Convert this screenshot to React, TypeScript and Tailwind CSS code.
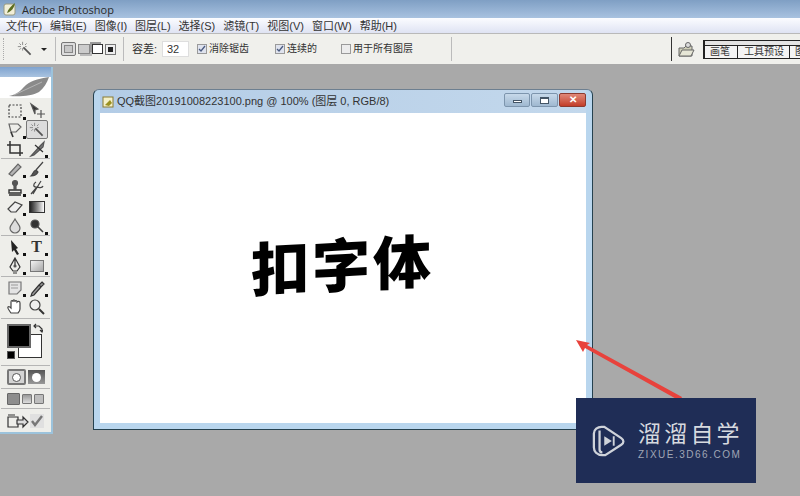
import type { ReactNode } from "react";

const menus = ["文件(F)", "编辑(E)", "图像(I)", "图层(L)", "选择(S)", "滤镜(T)", "视图(V)", "窗口(W)", "帮助(H)"];

// small gray tool glyph, 20x18 box
function Glyph({ children }: { children: ReactNode }) {
  return (
    <svg width="20" height="18" viewBox="0 0 20 18" fill="none" stroke="#555" strokeWidth="1.2">
      {children}
    </svg>
  );
}

function Tool({ children, more, active }: { children: ReactNode; more?: boolean; active?: boolean }) {
  return (
    <div className={`relative flex h-[19px] w-[22px] items-center justify-center rounded-[2px] ${active ? "border border-[#777] bg-[#dcdcdc]" : ""}`}>
      {children}
      {more && <div className="absolute bottom-[0px] right-[0px] h-[3px] w-[3px] bg-[#111]" />}
    </div>
  );
}

function Row({ children }: { children: ReactNode }) {
  return <div className="flex justify-center">{children}</div>;
}

function Divider() {
  return <div className="mx-[1px] h-[1px] shrink-0 bg-[#b5b5b5]" />;
}

function Check({ on, label, className }: { on?: boolean; label: string; className: string }) {
  return (
    <div className={`flex items-center gap-[2px] ${className}`}>
      <div className={`flex h-[10px] w-[10px] items-center justify-center border border-[#9a9a9a] ${on ? "bg-[#dfe3ee]" : "bg-[#ececec]"}`}>
        {on && (
          <svg width="8" height="8" viewBox="0 0 8 8" fill="none" stroke="#4a5a80" strokeWidth="1.3">
            <path d="M1 4l2 2 4-5" />
          </svg>
        )}
      </div>
      <span>{label}</span>
    </div>
  );
}

function Wand({ size = 20 }: { size?: number }) {
  return (
    <svg width={size} height={size} viewBox="0 0 20 20" fill="none" stroke="#555" strokeWidth="1.5">
      <path d="M8 8l9 9" strokeWidth="2.2" />
      <path d="M7 1v4M7 9v3M1 7h4M10 5l2-2M3 3l2 2M3 11l2-2M10 7h2" strokeWidth="1" stroke="#777" />
    </svg>
  );
}

function ToolPalette() {
  return (
    <div className="absolute left-0 top-[67px] flex h-[367px] w-[53px] flex-col border-r-2 border-b-2 border-[#9cc3dc] bg-[#eeeeea]">
      <div className="h-[10px] shrink-0 bg-gradient-to-b from-[#7fa3cf] to-[#a9c3e0]" />
      <div className="flex h-[21px] shrink-0 items-center justify-end bg-white pr-[1px]">
        <svg width="42" height="21" viewBox="0 0 42 21">
          <path d="M1 19C10 17 13 13 18 8 24 3 34 1 41 0 39 6 36 11 31 15 24 19 12 20 1 19Z" fill="#8a8a8a" />
          <path d="M6 18L34 5" stroke="#c4c4c4" strokeWidth="0.7" />
        </svg>
      </div>
      <div className="flex flex-1 flex-col pt-[3px]">
        <div className="flex flex-col">
          <Row>
            <Tool more>
              <Glyph>
                <rect x="4" y="3" width="12" height="12" strokeDasharray="2 1.5" stroke="#444" />
              </Glyph>
            </Tool>
            <Tool>
              <Glyph>
                <path d="M4 2l7 5-3 1 0 4Z" fill="#333" />
                <path d="M14 8v8M10 12h8" stroke="#555" />
              </Glyph>
            </Tool>
          </Row>
          <Row>
            <Tool more>
              <Glyph>
                <path d="M4 3h9l3 3-5 5H6Z" stroke="#666" />
                <path d="M6 11l2 5" stroke="#333" strokeWidth="1.6" />
              </Glyph>
            </Tool>
            <Tool active>
              <Wand size={16} />
            </Tool>
          </Row>
          <Row>
            <Tool>
              <Glyph>
                <path d="M2 5h13v11M5 1v12h13" stroke="#333" strokeWidth="1.5" />
              </Glyph>
            </Tool>
            <Tool more>
              <Glyph>
                <path d="M4 16L14 5l3-3-1 5L7 15Z" fill="#777" />
                <path d="M8 5l8 7" stroke="#333" />
              </Glyph>
            </Tool>
          </Row>
        </div>
        <Divider />
        <div className="flex flex-col">
          <Row>
            <Tool more>
              <Glyph>
                <path d="M4 14L13 4l3 3-9 9Z" fill="#b5b5b5" stroke="#666" />
              </Glyph>
            </Tool>
            <Tool more>
              <Glyph>
                <path d="M16 2L9 10M9 10c-3 1-3 4-5 6 4 0 6-2 7-4Z" fill="#555" stroke="#444" />
              </Glyph>
            </Tool>
          </Row>
          <Row>
            <Tool more>
              <Glyph>
                <circle cx="10" cy="4" r="2.5" fill="#555" />
                <path d="M9 6h2v4H9Z" fill="#555" />
                <path d="M4 11h12v3H4ZM4 16h12" stroke="#333" strokeWidth="1.4" />
              </Glyph>
            </Tool>
            <Tool more>
              <Glyph>
                <path d="M4 15L10 8M9 3c-3 2-3 5 0 5s6 2 7-1M14 2L6 15" stroke="#444" />
              </Glyph>
            </Tool>
          </Row>
          <Row>
            <Tool more>
              <Glyph>
                <path d="M3 11l7-7 7 3-6 7H6Z" fill="#eee" stroke="#444" />
              </Glyph>
            </Tool>
            <Tool>
              <div className="h-[12px] w-[16px] border border-[#333] bg-gradient-to-r from-[#222] to-white" />
            </Tool>
          </Row>
          <Row>
            <Tool more>
              <Glyph>
                <path d="M10 2c2 4 5 6 5 9a5 5 0 01-10 0c0-3 3-5 5-9Z" fill="#ddd" stroke="#666" />
              </Glyph>
            </Tool>
            <Tool more>
              <Glyph>
                <circle cx="8" cy="7" r="4" fill="#333" />
                <path d="M10 9l6 6" stroke="#444" strokeWidth="1.6" />
              </Glyph>
            </Tool>
          </Row>
        </div>
        <Divider />
        <div className="flex flex-col py-[1px]">
          <Row>
            <Tool more>
              <Glyph>
                <path d="M6 2l7 8-2 1 3 5-2 1-3-5-2 2Z" fill="#222" stroke="none" />
              </Glyph>
            </Tool>
            <Tool more>
              <span className="font-['Liberation_Serif',serif] text-[16px] leading-none font-bold text-[#333]">T</span>
            </Tool>
          </Row>
          <Row>
            <Tool more>
              <Glyph>
                <path d="M10 1l5 9-3 4H8l-3-4ZM10 1v7M8 16h4" stroke="#333" />
                <circle cx="10" cy="9" r="1" fill="#333" />
              </Glyph>
            </Tool>
            <Tool more>
              <div className="h-[12px] w-[14px] border border-[#777] bg-gradient-to-br from-[#f2f2f2] to-[#a8a8a8]" />
            </Tool>
          </Row>
        </div>
        <Divider />
        <div className="flex flex-col pt-[1px] pb-[2px]">
          <Row>
            <Tool more>
              <Glyph>
                <path d="M4 3h12v8l-4 4H4Z" fill="#e4e4e4" stroke="#777" />
                <path d="M6 6h7M6 9h7" stroke="#999" />
              </Glyph>
            </Tool>
            <Tool more>
              <Glyph>
                <path d="M15 3l2 2-3 3-2-2ZM12 6L5 14l-1 3 3-1 7-8" fill="#999" stroke="#333" />
              </Glyph>
            </Tool>
          </Row>
          <Row>
            <Tool>
              <Glyph>
                <path d="M6 15c-2-3-4-5-3-6s3 1 3 1V4c0-2 2-2 2 0 0-3 2-3 2 0 0-2 2-2 2 0 1-1 3-1 3 1v6c0 2-1 3-2 4Z" fill="#fff" stroke="#444" />
              </Glyph>
            </Tool>
            <Tool>
              <Glyph>
                <circle cx="8" cy="7" r="5" fill="#eee" stroke="#444" />
                <path d="M12 11l5 5" stroke="#333" strokeWidth="2" />
              </Glyph>
            </Tool>
          </Row>
        </div>
        <Divider />
        {/* foreground and background swatches */}
        <div className="relative h-[46px] shrink-0">
          <div className="absolute left-[18px] top-[15px] h-[24px] w-[24px] border border-[#333] bg-white" />
          <div className="absolute left-[7px] top-[5px] h-[24px] w-[24px] border-2 border-[#666] bg-black" />
          <svg className="absolute left-[33px] top-[4px]" width="10" height="10" viewBox="0 0 10 10" fill="none" stroke="#333" strokeWidth="1.2">
            <path d="M1 3h5l3 3v3M3 1L1 3l2 2M7 7l2 2 1-2" />
          </svg>
          <div className="absolute left-[7px] top-[32px] h-[8px] w-[8px] border border-[#555] bg-black" />
        </div>
        <Divider />
        <div className="flex h-[22px] shrink-0 items-center justify-center gap-[2px]">
          <div className="flex h-[16px] w-[19px] items-center justify-center rounded-[2px] border-2 border-[#777] bg-[#d4d4d4]">
            <div className="h-[9px] w-[9px] rounded-full border border-[#555] bg-white" />
          </div>
          <div className="flex h-[14px] w-[17px] items-center justify-center bg-gradient-to-b from-[#555] to-[#999]">
            <div className="h-[9px] w-[9px] rounded-full bg-white" />
          </div>
        </div>
        <Divider />
        <div className="flex h-[19px] shrink-0 items-center justify-center gap-[2px]">
          <div className="h-[12px] w-[13px] rounded-[1px] border border-[#666] bg-[#8d8d8d]" />
          <div className="h-[10px] w-[10px] rounded-[1px] border border-[#777] bg-gradient-to-b from-[#999] to-[#ddd]" />
          <div className="h-[10px] w-[10px] rounded-[1px] border border-[#777] bg-[#bdbdbd]" />
        </div>
        <Divider />
        <div className="flex h-[23px] shrink-0 items-center justify-center gap-[1px]">
          <svg width="22" height="16" viewBox="0 0 22 16" fill="none" stroke="#333" strokeWidth="1.2">
            <path d="M1 4h10v10H1ZM1 2h7" />
            <path d="M10 7h6V4l5 5-5 5v-3h-6Z" fill="#ddd" />
          </svg>
          <div className="flex h-[14px] w-[14px] items-center justify-center bg-[#e0e0e0]">
            <svg width="12" height="12" viewBox="0 0 12 12" fill="none" stroke="#777" strokeWidth="2.4">
              <path d="M1 6l3 4 7-9" />
            </svg>
          </div>
        </div>
      </div>
    </div>
  );
}

function DocWindow() {
  return (
    <div className="absolute left-[93px] top-[89px] flex h-[341px] w-[500px] flex-col rounded-t-[6px] border border-[#25414f] border-t-[#6d7f90] bg-[#b9d6ee] px-[6px] pb-[6px]">
      <div className="flex h-[23px] items-center bg-gradient-to-r from-[#b3cce6] to-[#c3d8ec]">
        <svg className="mr-[3px] ml-[2px]" width="12" height="12" viewBox="0 0 12 12">
          <rect x="1" y="1" width="10" height="10" fill="#f4f0c8" stroke="#8a7a30" />
          <path d="M3 9l5-5 2 3-3 3Z" fill="#9a9020" />
        </svg>
        <span className="text-[11px] leading-none whitespace-nowrap text-[#333]">QQ截图20191008223100.png @ 100% (图层 0, RGB/8)</span>
        <div className="ml-auto flex items-center gap-[1px] pb-[3px]">
          <div className="flex h-[14px] w-[26px] items-center justify-center rounded-[2px] border border-[#7d95ad] bg-gradient-to-b from-[#c7d9ea] to-[#9fb8d0]">
            <div className="mt-[3px] h-[3px] w-[9px] border border-[#445566] bg-white" />
          </div>
          <div className="flex h-[14px] w-[27px] items-center justify-center rounded-[2px] border border-[#7d95ad] bg-gradient-to-b from-[#c7d9ea] to-[#9fb8d0]">
            <div className="h-[7px] w-[9px] border border-t-2 border-[#445566] bg-white" />
          </div>
          <div className="flex h-[14px] w-[27px] items-center justify-center rounded-[2px] border border-[#8c3b30] bg-gradient-to-b from-[#e08878] to-[#c23c28] text-[10px] leading-none font-bold text-white">
            ✕
          </div>
        </div>
      </div>
      <div className="flex flex-1 items-center justify-center bg-white pb-[13px]">
        <span className="-skew-y-3 font-['Noto_Sans_CJK_SC',sans-serif] text-[58px] leading-none font-black tracking-[3px] text-black">
          扣字体
        </span>
      </div>
    </div>
  );
}

function Watermark() {
  return (
    <div className="absolute left-[576px] top-[398px] flex h-[85px] w-[180px] items-center bg-[#1f2d56] pl-[16px]">
      <svg width="34" height="36" viewBox="0 0 36 38" fill="none" stroke="#cfd3da" strokeWidth="2.4">
        <path d="M10 4h3l18 12c3 2 3 5 0 7L14 34H11C5 34 2 30 2 26V11c0-4 4-7 8-7Z" />
        <path d="M8 8v20c0 2 1 3 3 3" />
        <path d="M13 14l8 5-8 5Z" fill="#cfd3da" stroke="none" />
        <path d="M23 14v10" strokeWidth="2" />
      </svg>
      <div className="ml-[12px] flex flex-col gap-[6px]">
        <span className="font-['Noto_Sans_CJK_SC',sans-serif] text-[23px] leading-[23px] tracking-[3.2px] whitespace-nowrap text-[#d6d9df]">溜溜自学</span>
        <span className="text-[10px] leading-[10px] tracking-[1.5px] whitespace-nowrap text-[#a0a6b5]">ZIXUE.3D66.COM</span>
      </div>
    </div>
  );
}

export default function App() {
  return (
    <div className="relative flex h-[496px] w-[800px] flex-col overflow-hidden bg-[#a9a9a9] font-['Liberation_Sans','Noto_Sans_CJK_SC',sans-serif] text-[#333]">
      <div className="flex h-[18px] items-center bg-gradient-to-b from-[#7f9fc4] to-[#a8c2e0] pl-[3px]">
        <svg width="14" height="14" viewBox="0 0 14 14">
          <rect x="1" y="2" width="11" height="11" rx="2" fill="#f2efd8" stroke="#9a9a80" />
          <path d="M4 11c1-4 4-7 8-10-1 5-3 8-8 10Z" fill="#5c6d20" />
        </svg>
        <span className="ml-[5px] font-['Open_Sans',sans-serif] text-[11px] leading-none text-[#2a2a2a]">Adobe Photoshop</span>
      </div>
      <div className="flex h-[15px] items-center gap-[8px] bg-gradient-to-b from-[#fbfcff] to-[#dfe3f3] pt-[2px] pl-[6px] text-[11px] leading-none">
        {menus.map((m) => (
          <span key={m}>{m}</span>
        ))}
      </div>
      <div className="flex h-[31px] items-center border-t border-[#b9b9b9] bg-[#f0f0ec] text-[10px] leading-none">
        <div className="ml-[3px] h-[22px] w-[1px] border-l border-dotted border-[#aaa]" />
        <div className="ml-[13px]">
          <Wand size={16} />
        </div>
        <div className="ml-[8px] h-0 w-0 border-x-[3px] border-t-[3px] border-x-transparent border-t-[#222]" />
        <div className="ml-[8px] h-[24px] w-[1px] bg-[#bbb]" />
        <div className="ml-[5px] flex items-center gap-[2px]">
          <div className="flex h-[14px] w-[15px] items-center justify-center rounded-[2px] border border-[#777] bg-[#ddd]">
            <div className="h-[8px] w-[9px] border border-[#888] bg-[#c8c8c8]" />
          </div>
          <div className="h-[10px] w-[12px] border border-[#888] bg-[#ccc] shadow-[2px_2px_0_#bbb]" />
          <div className="h-[10px] w-[11px] border border-[#333] bg-white shadow-[-2px_-2px_0_#999]" />
          <div className="flex h-[11px] w-[11px] items-center justify-center border border-[#777] bg-[#eee]">
            <div className="h-[5px] w-[5px] bg-[#222]" />
          </div>
        </div>
        <div className="ml-[7px] h-[24px] w-[1px] bg-[#bbb]" />
        <span className="ml-[8px] w-[30px] text-[11px]">容差:</span>
        <div className="flex h-[16px] w-[27px] items-center border border-[#dedede] bg-white pl-[4px] text-[11px]">32</div>
        <Check on label="消除锯齿" className="ml-[8px] w-[78px]" />
        <Check on label="连续的" className="w-[66px]" />
        <Check label="用于所有图层" className="w-[110px]" />
        <div className="h-[24px] w-[1px] bg-[#bbb]" />
        <div className="ml-[219px] h-[24px] w-[1px] bg-[#333]" />
        <svg className="ml-[6px]" width="17" height="17" viewBox="0 0 17 17" stroke="#666">
          <path d="M1 7h5l2-2h6v10H1Z" fill="#cfcfb8" />
          <path d="M1 15l3-6h12l-3 6Z" fill="#e6e6d6" />
          <circle cx="10" cy="4" r="2.5" fill="#ddd" />
        </svg>
        <div className="ml-[8px] flex h-[19px] flex-1 items-end overflow-hidden border-t border-b border-l-2 border-[#222] bg-[#e4e4e4] pt-[4px]">
          <div className="flex h-[13px] w-[33px] shrink-0 items-center border-t border-r border-[#222] bg-[#f4f4f4] pl-[5px] whitespace-nowrap">画笔</div>
          <div className="flex h-[13px] w-[52px] shrink-0 items-center border-t border-r border-[#222] bg-[#f4f4f4] pl-[6px] whitespace-nowrap">工具预设</div>
          <div className="flex h-[13px] flex-1 items-center border-t border-[#222] bg-[#f4f4f4] pl-[5px] whitespace-nowrap">图</div>
        </div>
      </div>
      <div className="relative flex-1" />
      <ToolPalette />
      <DocWindow />
      {/* red annotation arrow */}
      <svg className="absolute left-[570px] top-[335px]" width="125" height="70" viewBox="0 0 125 70">
        <path d="M6 5L20 8 17 10 112 62 110 66 15 13 13 17Z" fill="#e8423c" />
      </svg>
      <Watermark />
    </div>
  );
}
